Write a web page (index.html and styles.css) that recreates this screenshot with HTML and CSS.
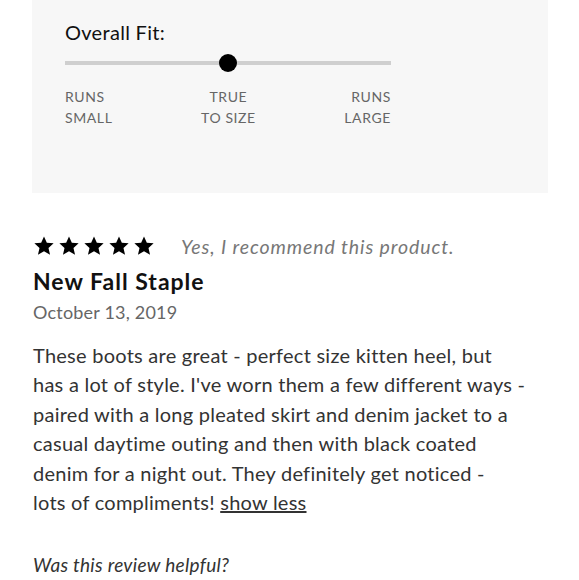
FILE: index.html
```html
<!DOCTYPE html>
<html>
<head>
<meta charset="utf-8">
<link rel="stylesheet" href="styles.css">
</head>
<body>
<div class="page">
  <section class="fit-panel">
    <div class="fit-title">Overall Fit:</div>
    <div class="fit-slider">
      <div class="track"></div>
      <div class="thumb"></div>
    </div>
    <div class="fit-labels">
      <div class="lbl left">RUNS<br>SMALL</div>
      <div class="lbl mid">TRUE<br>TO SIZE</div>
      <div class="lbl right">RUNS<br>LARGE</div>
    </div>
  </section>
  <section class="review">
    <div class="rating-row">
      <div class="stars">
        <svg viewBox="0 0 24 24" class="star"><path d="M12 1.5l3.1 6.9 7.4.7-5.6 5 1.7 7.4L12 17.6l-6.6 3.9 1.7-7.4-5.6-5 7.4-.7z"/></svg>
        <svg viewBox="0 0 24 24" class="star"><path d="M12 1.5l3.1 6.9 7.4.7-5.6 5 1.7 7.4L12 17.6l-6.6 3.9 1.7-7.4-5.6-5 7.4-.7z"/></svg>
        <svg viewBox="0 0 24 24" class="star"><path d="M12 1.5l3.1 6.9 7.4.7-5.6 5 1.7 7.4L12 17.6l-6.6 3.9 1.7-7.4-5.6-5 7.4-.7z"/></svg>
        <svg viewBox="0 0 24 24" class="star"><path d="M12 1.5l3.1 6.9 7.4.7-5.6 5 1.7 7.4L12 17.6l-6.6 3.9 1.7-7.4-5.6-5 7.4-.7z"/></svg>
        <svg viewBox="0 0 24 24" class="star"><path d="M12 1.5l3.1 6.9 7.4.7-5.6 5 1.7 7.4L12 17.6l-6.6 3.9 1.7-7.4-5.6-5 7.4-.7z"/></svg>
      </div>
      <span class="recommend">Yes, I recommend this product.</span>
    </div>
    <h2 class="review-title">New Fall Staple</h2>
    <div class="review-date">October 13, 2019</div>
    <p class="review-body">These boots are great - perfect size kitten heel, but<br>has a lot of style. I've worn them a few different ways -<br>paired with a long pleated skirt and denim jacket to a<br>casual daytime outing and then with black coated<br>denim for a night out. They definitely get noticed -<br>lots of compliments! <a class="show-less" href="#">show less</a></p>
    <div class="helpful">Was this review helpful?</div>
  </section>
</div>
</body>
</html>
```

FILE: styles.css
```css
* { box-sizing: border-box; }
html, body { margin: 0; padding: 0; background: #fff; }
body { font-family: Lato, "Noto Sans", sans-serif; color: #222; }
.page { width: 579px; }

.fit-panel {
  margin: 0 31px 0 32px;
  height: 193px;
  background: #f7f7f7;
  padding: 20px 0 0 33px;
}
.fit-title { font-size: 20px; color: #111; line-height: 24px; letter-spacing: 0.3px; }
.fit-slider { position: relative; width: 326px; height: 20px; margin-top: 9px; }
.track { position: absolute; left: 0; right: 0; top: 8px; height: 4px; background: #cfcfcf; }
.thumb { position: absolute; left: 154px; top: 1px; width: 18px; height: 18px; border-radius: 50%; background: #000; }
.fit-labels { display: flex; justify-content: space-between; width: 326px; margin-top: 13px; }
.lbl { font-size: 14px; line-height: 21px; color: #666; letter-spacing: 0.6px; }
.lbl.mid { text-align: center; }
.lbl.right { text-align: right; }

.review { padding: 40px 0 0 33px; }
.rating-row { display: flex; align-items: center; height: 26px; }
.stars { display: flex; gap: 3px; }
.star { width: 22px; height: 22px; fill: #000; display: block; }
.recommend { margin-left: 26px; font-style: italic; font-size: 19.5px; color: #777; letter-spacing: 0.9px; }
.review-title { margin: 8px 0 0; font-size: 23px; font-weight: 700; line-height: 28px; color: #111; letter-spacing: 1px; }
.review-date { margin-top: 5px; font-size: 18px; color: #666; line-height: 24px; letter-spacing: 0.2px; }
.review-body { margin: 17px 0 0; font-size: 20px; line-height: 29.4px; color: #333; width: 530px; letter-spacing: 0.25px; }
.show-less { color: #333; text-decoration: underline; }
.helpful { margin-top: 36px; font-style: italic; font-size: 19px; color: #333; letter-spacing: 0.3px; }
```
